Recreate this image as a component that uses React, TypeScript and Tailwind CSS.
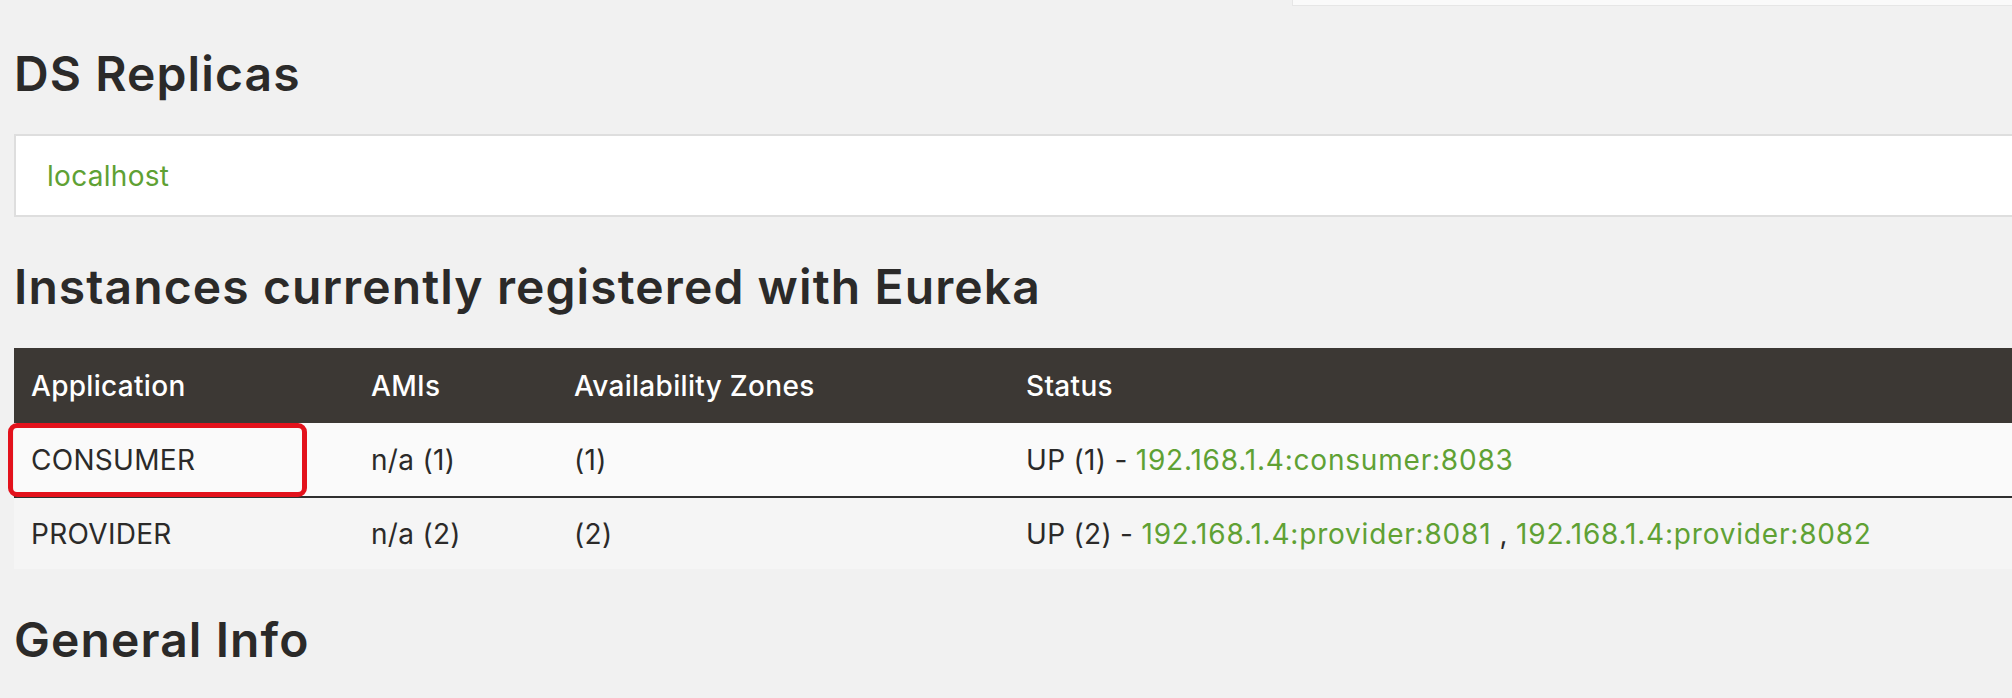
import React from "react";

const rows = [
  {
    app: "CONSUMER",
    amis: "n/a (1)",
    zones: "(1)",
    status: "UP (1) - ",
    links: ["192.168.1.4:consumer:8083"],
    bg: "bg-[#fafafa]",
  },
  {
    app: "PROVIDER",
    amis: "n/a (2)",
    zones: "(2)",
    status: "UP (2) - ",
    links: ["192.168.1.4:provider:8081", "192.168.1.4:provider:8082"],
    bg: "bg-[#f5f5f5]",
  },
];

const cols = "grid grid-cols-[340px_203px_452px_1fr]";
const heading = "text-[48px] font-semibold leading-[56px] tracking-[1.1px]";

export default function App() {
  return (
    <div className="min-h-screen overflow-hidden bg-[#f1f1f1] font-['Inter',sans-serif] text-[#2b2a29]">
      <div className="flex justify-end">
        <div className="h-[6px] w-[720px] border-b border-l border-[#e6e6e6] bg-[#fafafa]" />
      </div>

      <div className="pl-[14px]">
        <h1 className={`mt-[40px] ${heading}`}>DS Replicas</h1>

        <div className="mt-[32px] flex h-[83px] items-center border-2 border-r-0 border-[#dedede] bg-white pl-[31px]">
          <a className="text-[28px] tracking-[0.3px] text-[#5fa134]">localhost</a>
        </div>

        <h1 className={`mt-[42px] ${heading}`}>Instances currently registered with Eureka</h1>

        <div className="relative mt-[33px] text-[28px] tracking-[0.3px]">
          <div className={`${cols} h-[75px] items-center bg-[#3c3834] font-medium text-white`}>
            <div className="pl-[17px]">Application</div>
            <div className="pl-[17px]">AMIs</div>
            <div className="pl-[17px]">Availability Zones</div>
            <div className="pl-[17px]">Status</div>
          </div>
          {rows.map((r, i) => (
            <div
              key={r.app}
              className={`${cols} ${r.bg} items-center ${i === 0 ? "h-[75px] border-b-2 border-[#2f2f2f]" : "h-[71px]"}`}
            >
              <div className="pl-[17px]">{r.app}</div>
              <div className="pl-[17px]">{r.amis}</div>
              <div className="pl-[17px]">{r.zones}</div>
              <div className="whitespace-nowrap pl-[17px]">
                {r.status}
                {r.links.map((l, j) => (
                  <span key={l}>
                    {j > 0 && " , "}
                    <a className="tracking-[0.8px] text-[#5fa134]">{l}</a>
                  </span>
                ))}
              </div>
            </div>
          ))}
          {/* annotation around the first application */}
          <div className="absolute left-[-6px] top-[75px] h-[74px] w-[299px] rounded-[9px] border-[5px] border-[#e3121c]" />
        </div>

        <h1 className={`mt-[43px] ${heading}`}>General Info</h1>
      </div>
    </div>
  );
}
